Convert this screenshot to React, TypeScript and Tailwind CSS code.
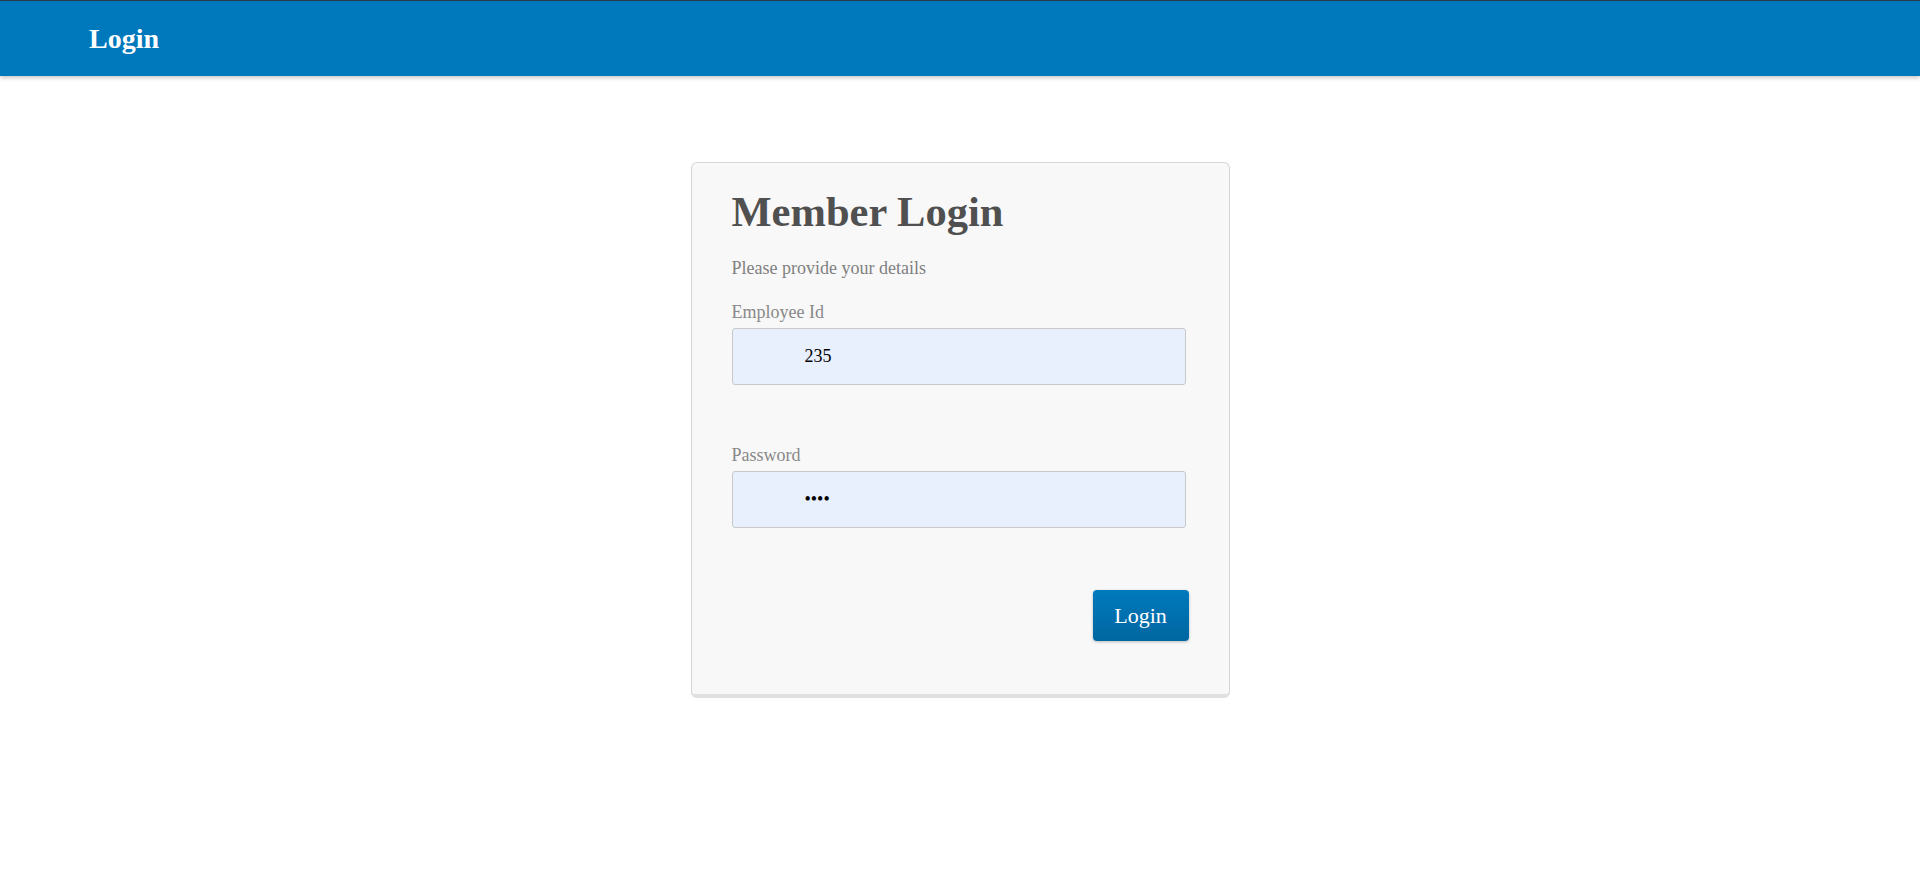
import React from "react";

type FieldProps = {
  label: string;
  type?: string;
  value: string;
};

function Field({ label, type = "text", value }: FieldProps) {
  return (
    <label className="flex flex-col">
      <span className="text-[18px] leading-[24px] text-[#888888]">{label}</span>
      <input
        type={type}
        defaultValue={value}
        className="mt-[4px] h-[57px] w-[454px] rounded-[3px] border border-[#c9c9c9] bg-[#e8f0fe] pl-[72px] font-['Liberation_Serif','Times_New_Roman',serif] text-[18px] text-black outline-none"
      />
    </label>
  );
}

export default function App() {
  return (
    <div className="min-h-screen bg-white font-['Liberation_Serif','Times_New_Roman',serif]">
      <header className="flex h-[76px] items-center border-t border-[#2b3a48] bg-[#0079bc] pl-[89px] shadow-[0_2px_4px_rgba(0,0,0,0.22)]">
        <h2 className="text-[28px] font-bold leading-none text-white">Login</h2>
      </header>

      <main className="flex justify-center pt-[86px]">
        <div className="flex w-[539px] flex-col rounded-[6px] border border-b-4 border-[#d6d6d6] border-b-[#e0e0e0] bg-[#f8f8f8] px-[40px] pb-[53px] pt-[25px]">
          <h1 className="text-[42.5px] font-bold leading-[48px] text-[#505050]">Member Login</h1>
          <p className="mt-[20px] text-[18px] leading-[24px] text-[#808080]">
            Please provide your details
          </p>

          <div className="mt-[20px]">
            <Field label="Employee Id" value="235" />
          </div>
          <div className="mt-[58px]">
            <Field label="Password" type="password" value="1234" />
          </div>

          <div className="mt-[62px] flex justify-end">
            <button className="flex h-[51px] w-[96px] items-center justify-center rounded-[4px] bg-gradient-to-b from-[#007abd] to-[#0066a0] text-[22px] text-white shadow-[0_1px_3px_rgba(0,0,0,0.25)]">
              Login
            </button>
          </div>
        </div>
      </main>
    </div>
  );
}
